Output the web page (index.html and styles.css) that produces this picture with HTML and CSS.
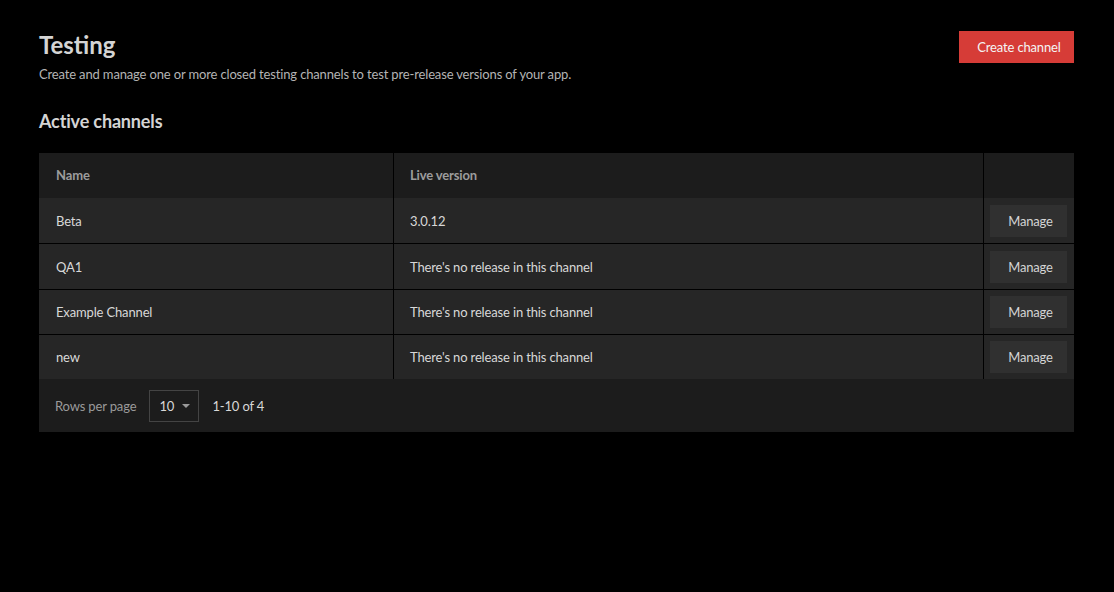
FILE: index.html
```html
<!DOCTYPE html>
<html>
<head>
<meta charset="utf-8">
<link rel="stylesheet" href="styles.css">
</head>
<body>
<div class="page">
  <div class="top">
    <div>
      <h1 class="title">Testing</h1>
      <p class="subtitle">Create and manage one or more closed testing channels to test pre-release versions of your app.</p>
    </div>
    <button class="primary">Create channel</button>
  </div>
  <h2 class="section">Active channels</h2>
  <div class="table">
    <div class="row head">
      <div class="cell c1">Name</div>
      <div class="cell c2">Live version</div>
      <div class="cell c3"></div>
    </div>
    <div class="row">
      <div class="cell c1">Beta</div>
      <div class="cell c2">3.0.12</div>
      <div class="cell c3"><button class="manage">Manage</button></div>
    </div>
    <div class="row">
      <div class="cell c1">QA1</div>
      <div class="cell c2">There's no release in this channel</div>
      <div class="cell c3"><button class="manage">Manage</button></div>
    </div>
    <div class="row short">
      <div class="cell c1">Example Channel</div>
      <div class="cell c2">There's no release in this channel</div>
      <div class="cell c3"><button class="manage">Manage</button></div>
    </div>
    <div class="row short last">
      <div class="cell c1">new</div>
      <div class="cell c2">There's no release in this channel</div>
      <div class="cell c3"><button class="manage">Manage</button></div>
    </div>
    <div class="footer">
      <span class="rpp">Rows per page</span>
      <div class="select"><span>10</span><svg width="8" height="4" viewBox="0 0 8 4"><path d="M0 0 L8 0 L4 4 Z" fill="#9a9a9a"/></svg></div>
      <span class="range">1-10 of 4</span>
    </div>
  </div>
</div>
</body>
</html>
```

FILE: styles.css
```css
html, body {
  margin: 0;
  padding: 0;
  background: #000;
  font-family: Lato, "Open Sans", sans-serif;
  letter-spacing: -0.15px;
}
.page {
  padding: 31px 40px 0 39px;
}
.top {
  display: flex;
  justify-content: space-between;
  align-items: flex-start;
}
.title {
  margin: 0;
  font-size: 24px;
  font-weight: 700;
  color: #d4d4d4;
  line-height: 28px;
  letter-spacing: 0;
}
.subtitle {
  margin: 7px 0 0;
  font-size: 13px;
  color: #b4b4b4;
  line-height: 16px;
}
.primary {
  background: #d63c37;
  color: #f4f4f4;
  border: none;
  font-family: inherit;
  letter-spacing: inherit;
  font-size: 13px;
  width: 115px;
  height: 32px;
  padding: 0 0 0 5px;
  cursor: pointer;
}
.section {
  margin: 28px 0 0;
  font-size: 18px;
  font-weight: 700;
  color: #d4d4d4;
  line-height: 22px;
}
.table {
  margin-top: 21px;
  background: #1c1c1c;
}
.row {
  display: flex;
  height: 45px;
  background: #262626;
  border-bottom: 1px solid #000;
}
.row.short {
  height: 44px;
}
.row.last {
  border-bottom: none;
}
.row.head {
  background: #1c1c1c;
  border-bottom: none;
}
.cell {
  display: flex;
  align-items: center;
  font-size: 13px;
  color: #d8d8d8;
}
.head .cell {
  color: #9c9c9c;
  font-weight: 700;
  padding-bottom: 2px;
}
.c1 {
  width: 355px;
  padding-left: 17px;
  box-sizing: border-box;
  border-right: 1px solid #000;
}
.c2 {
  width: 590px;
  padding-left: 16px;
  box-sizing: border-box;
  border-right: 1px solid #000;
}
.c3 {
  flex: 1;
  padding-left: 6px;
}
.manage {
  width: 77px;
  height: 32px;
  background: #303030;
  color: #d4d4d4;
  border: none;
  font-family: inherit;
  letter-spacing: inherit;
  font-size: 13px;
  padding: 0 0 0 4px;
  cursor: pointer;
}
.footer {
  height: 53px;
  display: flex;
  align-items: center;
  padding-left: 16px;
  background: #1c1c1c;
  font-size: 13px;
}
.rpp {
  color: #9a9a9a;
}
.select {
  margin-left: 13px;
  width: 50px;
  height: 32px;
  box-sizing: border-box;
  border: 1px solid #444;
  display: flex;
  align-items: center;
  gap: 8px;
  padding-left: 9px;
  color: #d8d8d8;
}
.range {
  margin-left: 13px;
  color: #d8d8d8;
}
```
